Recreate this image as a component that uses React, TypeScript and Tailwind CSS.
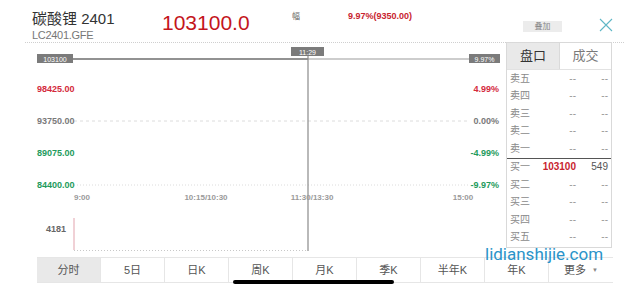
import React from 'react';

const FONT = '[font-family:"Liberation_Sans","Noto_Sans_CJK_SC",sans-serif]';

const askRows = ['卖五', '卖四', '卖三', '卖二', '卖一'];
const bidRows = [
  { label: '买一', price: '103100', vol: '549' },
  { label: '买二', price: '--', vol: '--' },
  { label: '买三', price: '--', vol: '--' },
  { label: '买四', price: '--', vol: '--' },
  { label: '买五', price: '--', vol: '--' },
];
const periods = ['分时', '5日', '日K', '周K', '月K', '季K', '半年K', '年K'];

const leftAxis = [
  { y: 46, text: '98425.00', color: '#d42a3c' },
  { y: 78, text: '93750.00', color: '#7a7a7a' },
  { y: 110, text: '89075.00', color: '#1e9b5c' },
  { y: 142, text: '84400.00', color: '#1e9b5c' },
];
const rightAxis = [
  { y: 46, text: '4.99%', color: '#d42a3c' },
  { y: 78, text: '0.00%', color: '#7a7a7a' },
  { y: 110, text: '-4.99%', color: '#1e9b5c' },
  { y: 142, text: '-9.97%', color: '#1e9b5c' },
];

function Row({ label, price, vol, red }: { label: string; price: string; vol: string; red?: boolean }) {
  return (
    <div className="flex h-[17.5px] items-center px-[3px] text-[10px] leading-none">
      <span className="w-[30px] text-[#8a8a8a]">{label}</span>
      <span className={`w-[36px] text-right ${red ? 'font-bold text-[#c8242f]' : 'text-[#999]'}`}>{price}</span>
      <span className={`flex-1 text-right ${red ? 'text-[#555]' : 'text-[#999]'}`}>{vol}</span>
    </div>
  );
}

function Chart() {
  return (
    <svg width="506" height="214" className="shrink-0" fontFamily="Liberation Sans, sans-serif">
      <line x1="74" y1="78" x2="470" y2="78" stroke="#dcdcdc" strokeDasharray="3 3" />
      <line x1="74" y1="142" x2="470" y2="142" stroke="#dcdcdc" strokeDasharray="1 2" />
      <line x1="73" y1="16" x2="308" y2="16" stroke="#6e6e6e" strokeWidth="1.3" />
      <line x1="308" y1="16" x2="469" y2="16" stroke="#bdbdbd" strokeWidth="1.3" />
      <line x1="308" y1="12" x2="308" y2="208" stroke="#8a8a8a" strokeWidth="1.2" />

      <rect x="37" y="11" width="36" height="9" fill="#7b7b7b" />
      <text x="55" y="18.5" fontSize="7" fill="#fff" textAnchor="middle">103100</text>
      <rect x="291" y="4" width="33" height="9" fill="#7b7b7b" />
      <text x="307.5" y="11.5" fontSize="7" fill="#fff" textAnchor="middle">11:29</text>
      <rect x="469" y="11" width="31" height="9" fill="#7b7b7b" />
      <text x="484.5" y="18.5" fontSize="7" fill="#fff" textAnchor="middle">9.97%</text>

      {leftAxis.map((a) => (
        <text key={a.text} x="37" y={a.y + 3.2} fontSize="9" fontWeight="bold" fill={a.color}>
          {a.text}
        </text>
      ))}
      {rightAxis.map((a) => (
        <text key={a.text} x="499" y={a.y + 3.2} fontSize="9" fontWeight="bold" fill={a.color} textAnchor="end">
          {a.text}
        </text>
      ))}

      <g fontSize="8" fill="#9a9a9a" fontWeight="bold">
        <text x="74" y="157">9:00</text>
        <text x="206" y="157" textAnchor="middle">10:15/10:30</text>
        <text x="312" y="157" textAnchor="middle">11:30/13:30</text>
        <text x="463" y="157" textAnchor="middle">15:00</text>
      </g>

      <text x="46" y="189" fontSize="9" fontWeight="bold" fill="#666">4181</text>
      <line x1="74" y1="175" x2="74" y2="207" stroke="#e2a3ad" strokeWidth="1" />
      <line x1="74" y1="207.5" x2="308" y2="207.5" stroke="#c8c8c8" strokeDasharray="1 2" />
    </svg>
  );
}

export default function App() {
  return (
    <div className={`relative h-[289px] w-[624px] overflow-hidden bg-white ${FONT}`}>
      {/* header */}
      <div className="ml-[25px] flex h-[43px] items-start border-b border-dotted border-[#cfcfcf] pl-[7px]">
        <div className="w-[130px] pt-[10px]">
          <div className="text-[15px] leading-[18px] text-[#333]">碳酸锂 2401</div>
          <div className="mt-[1px] text-[11px] leading-[13px] tracking-[-0.3px] text-[#777]">LC2401.GFE</div>
        </div>
        <div className="w-[130px] pt-[11px] text-[21px] leading-[24px] text-[#c4161c]">103100.0</div>
        <div className="w-[56px] pt-[12px] text-[8px] leading-[10px] text-[#666]">幅</div>
        <div className="w-[175px] pt-[11px] text-[9px] font-bold leading-[10px] text-[#c8242f]">9.97%(9350.00)</div>
        <div className="mt-[21px] flex h-[11px] w-[39px] items-center justify-center bg-[#ececec] text-[8px] text-[#888]">
          叠加
        </div>
        <div className="ml-[37px] mt-[18px]">
          <svg width="14" height="14" viewBox="0 0 14 14">
            <path d="M1 1 L13 13 M13 1 L1 13" stroke="#5fb7c6" strokeWidth="1.1" fill="none" />
          </svg>
        </div>
      </div>

      {/* body */}
      <div className="flex h-[214px]">
        <Chart />
        <div className="mt-[-1px] h-[206px] w-[106px] border border-[#d9d9d9]">
          <div className="flex h-[27px] border-b border-[#e2e2e2] text-[13px]">
            <div className="flex w-[53px] items-center justify-center border-r border-[#dadada] bg-[#e9e9e9] text-[#333]">
              盘口
            </div>
            <div className="flex flex-1 items-center justify-center text-[#7a7a7a]">成交</div>
          </div>
          {askRows.map((l) => (
            <Row key={l} label={l} price="--" vol="--" />
          ))}
          <div className="h-[1px] bg-[#555]" />
          {bidRows.map((r, i) => (
            <Row key={r.label} label={r.label} price={r.price} vol={r.vol} red={i === 0} />
          ))}
        </div>
      </div>

      {/* period tabs */}
      <div className="ml-[37px] flex h-[26px] w-[576px] border-y border-[#e6e6e6] text-[11px] text-[#555]">
        {periods.map((p, i) => (
          <div
            key={p}
            className={`flex w-[64px] items-center justify-center border-r border-[#e6e6e6] ${i === 0 ? 'bg-[#e9e9e9]' : ''}`}
          >
            {p}
          </div>
        ))}
        <div className="flex flex-1 items-center justify-center gap-[6px]">
          <span>更多</span>
          <span className="text-[6px] text-[#888]">▼</span>
        </div>
      </div>

      {/* home indicator */}
      <div className="absolute left-[233px] top-[280px] h-[4px] w-[161px] rounded-full bg-black" />

      {/* watermark */}
      <div className="absolute left-[485px] top-[244px] text-[17px] leading-[21px] text-[#2a93c9] [font-family:Roboto,sans-serif]">
        lidianshijie.com
      </div>
    </div>
  );
}
